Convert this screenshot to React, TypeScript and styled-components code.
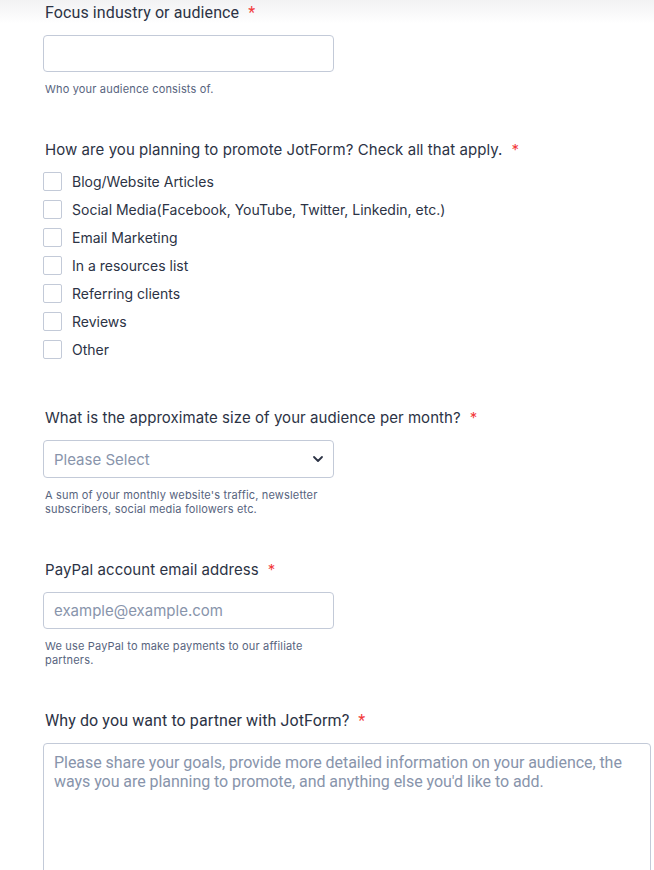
import React from 'react';
import styled, { createGlobalStyle } from 'styled-components';

const GlobalStyle = createGlobalStyle`
  html, body {
    margin: 0;
    padding: 0;
    background: #ffffff;
  }
  * {
    box-sizing: border-box;
  }
`;

const options = [
  'Blog/Website Articles',
  'Social Media(Facebook, YouTube, Twitter, Linkedin, etc.)',
  'Email Marketing',
  'In a resources list',
  'Referring clients',
  'Reviews',
  'Other',
];

function Label({ children, narrow }: { children: React.ReactNode; narrow?: boolean }) {
  return (
    <LabelText $narrow={narrow}>
      {children}
      <Required>*</Required>
    </LabelText>
  );
}

export default function App() {
  return (
    <>
      <GlobalStyle />
      <Page>
        <Field>
          <Label narrow>Focus industry or audience</Label>
          <TextInput type="text" />
          <Help>Who your audience consists of.</Help>
        </Field>

        <Field>
          <Label>How are you planning to promote JotForm? Check all that apply.</Label>
          <CheckList>
            {options.map(option => (
              <CheckRow key={option}>
                <CheckBox type="checkbox" />
                <OptionText>{option}</OptionText>
              </CheckRow>
            ))}
          </CheckList>
        </Field>

        <Field>
          <Label>What is the approximate size of your audience per month?</Label>
          <SelectBox>
            <SelectText>Please Select</SelectText>
            <svg width="12" height="8" viewBox="0 0 12 8">
              <path d="M2 2 L6 6 L10 2" fill="none" stroke="#2c3345" strokeWidth="1.8" strokeLinecap="round" strokeLinejoin="round" />
            </svg>
          </SelectBox>
          <Help>A sum of your monthly website's traffic, newsletter subscribers, social media followers etc.</Help>
        </Field>

        <Field>
          <Label>PayPal account email address</Label>
          <TextInput type="email" placeholder="example@example.com" />
          <Help>We use PayPal to make payments to our affiliate partners.</Help>
        </Field>

        <Field>
          <Label narrow>Why do you want to partner with JotForm?</Label>
          <TextArea placeholder="Please share your goals, provide more detailed information on your audience, the ways you are planning to promote, and anything else you'd like to add." />
        </Field>
      </Page>
    </>
  );
}

const Page = styled.div`
  width: 654px;
  min-height: 870px;
  padding: 3px 0 0 43px;
  display: flex;
  flex-direction: column;
  gap: 44px;
  background: linear-gradient(#f2f2f3 0, #ffffff 24px);
  font-family: Inter, 'Noto Sans', sans-serif;
  color: #2c3345;
`;

const Field = styled.div`
  display: flex;
  flex-direction: column;
  align-items: flex-start;
`;

const LabelText = styled.div<{ $narrow?: boolean }>`
  padding-left: 2px;
  margin-bottom: 12px;
  font-family: ${({ $narrow }) => ($narrow ? 'Roboto, sans-serif' : 'Inter, sans-serif')};
  font-size: ${({ $narrow }) => ($narrow ? '16px' : '15px')};
  letter-spacing: ${({ $narrow }) => ($narrow ? '0.1px' : '0.06px')};
  line-height: 20px;
  color: #2c3345;
  white-space: nowrap;
`;

const Required = styled.span`
  margin-left: 9px;
  color: #f23a3c;
`;

const TextInput = styled.input`
  width: 291px;
  height: 37px;
  padding: 0 10px;
  border: 1px solid #c3cad8;
  border-radius: 4px;
  background: #ffffff;
  font-family: Inter, sans-serif;
  font-size: 15px;
  color: #2c3345;
  outline: none;

  &::placeholder {
    color: #8894ab;
  }
`;

const Help = styled.div`
  width: 292px;
  margin-top: 10px;
  padding-left: 2px;
  font-size: 11px;
  letter-spacing: 0.17px;
  line-height: 14px;
  color: #57647e;
`;

const CheckList = styled.div`
  display: flex;
  flex-direction: column;
  margin: -5px 0 1px;
`;

const CheckRow = styled.label`
  height: 28px;
  display: flex;
  align-items: center;
  gap: 10px;
`;

const CheckBox = styled.input`
  appearance: none;
  margin: 0;
  width: 19px;
  height: 19px;
  border: 1px solid #c3cad8;
  border-radius: 2px;
  background: #ffffff;
`;

const OptionText = styled.span`
  font-size: 14px;
  color: #2c3345;
`;

const SelectBox = styled.div`
  width: 291px;
  height: 38px;
  padding: 0 9px 0 10px;
  display: flex;
  align-items: center;
  justify-content: space-between;
  border: 1px solid #c3cad8;
  border-radius: 4px;
  background: #ffffff;
`;

const SelectText = styled.span`
  font-size: 15px;
  color: #8894ab;
`;

const TextArea = styled.textarea`
  width: 608px;
  height: 200px;
  padding: 9px 10px;
  border: 1px solid #c3cad8;
  border-radius: 4px;
  resize: none;
  font-family: Roboto, sans-serif;
  font-size: 16px;
  letter-spacing: -0.05px;
  line-height: 19px;
  color: #2c3345;
  outline: none;

  &::placeholder {
    color: #8894ab;
  }
`;
